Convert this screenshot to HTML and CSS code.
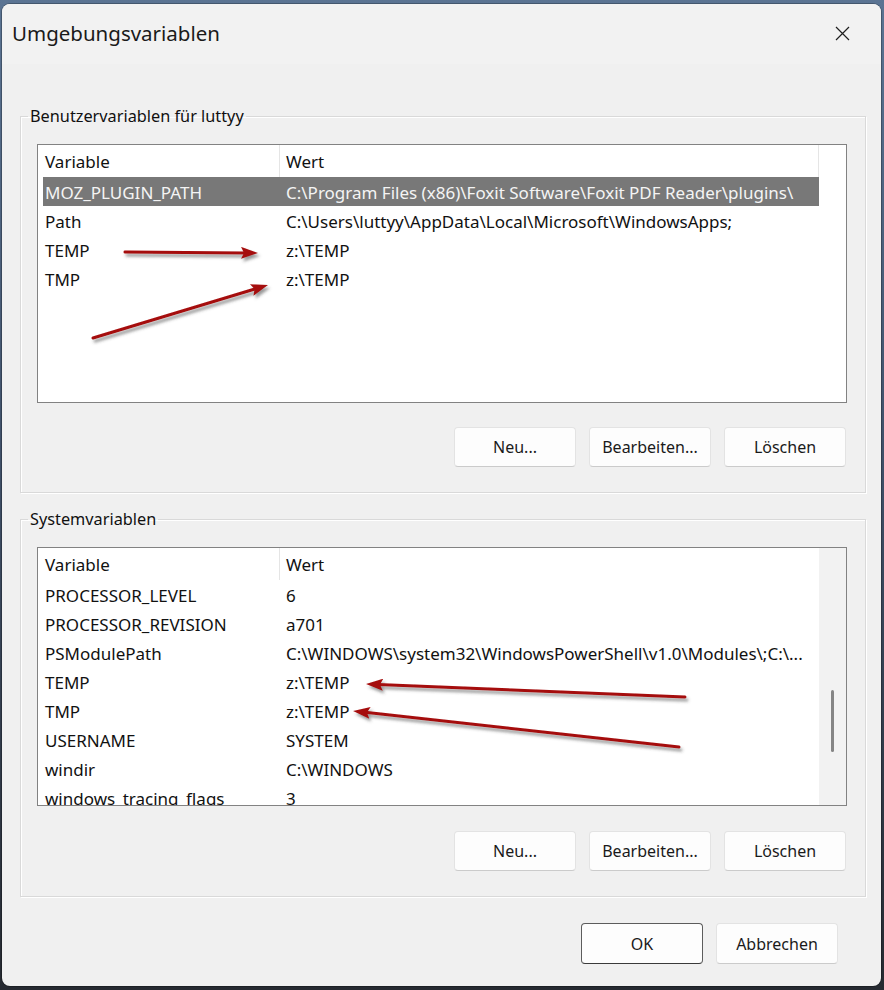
FILE: index.html
```html
<!DOCTYPE html>
<html lang="de">
<head>
  <meta charset="UTF-8">
  <title>Umgebungsvariablen</title>
  <link rel="stylesheet" href="styles.css">
</head>
<body>

<div class="dlg">
  <div class="titlebar">
    <span class="title">Umgebungsvariablen</span>
    <svg class="close" width="15" height="15" viewBox="0 0 15 15">
      <path d="M1 1 L14 14 M14 1 L1 14" stroke="#1f1f1f" stroke-width="1.2" fill="none"/>
    </svg>
  </div>

  <fieldset class="group">
    <legend>Benutzervariablen für luttyy</legend>
    <div class="list">
      <div class="rows">
        <div class="row head"><span>Variable</span><span>Wert</span><span></span></div>
        <div class="row sel"><span>MOZ_PLUGIN_PATH</span><span>C:\Program Files (x86)\Foxit Software\Foxit PDF Reader\plugins\</span><span></span></div>
        <div class="row"><span>Path</span><span>C:\Users\luttyy\AppData\Local\Microsoft\WindowsApps;</span><span></span></div>
        <div class="row"><span>TEMP</span><span>z:\TEMP</span><span></span></div>
        <div class="row"><span>TMP</span><span>z:\TEMP</span><span></span></div>
      </div>
    </div>
    <div class="btns">
      <button class="btn">Neu...</button>
      <button class="btn">Bearbeiten...</button>
      <button class="btn">Löschen</button>
    </div>
  </fieldset>

  <fieldset class="group sys">
    <legend>Systemvariablen</legend>
    <div class="list">
      <div class="rows">
        <div class="row head"><span>Variable</span><span>Wert</span></div>
        <div class="row"><span>PROCESSOR_LEVEL</span><span>6</span></div>
        <div class="row"><span>PROCESSOR_REVISION</span><span>a701</span></div>
        <div class="row"><span>PSModulePath</span><span>C:\WINDOWS\system32\WindowsPowerShell\v1.0\Modules\;C:\...</span></div>
        <div class="row"><span>TEMP</span><span>z:\TEMP</span></div>
        <div class="row"><span>TMP</span><span>z:\TEMP</span></div>
        <div class="row"><span>USERNAME</span><span>SYSTEM</span></div>
        <div class="row"><span>windir</span><span>C:\WINDOWS</span></div>
        <div class="row"><span>windows_tracing_flags</span><span>3</span></div>
      </div>
      <div class="vscroll"><div class="thumb"></div></div>
    </div>
    <div class="btns">
      <button class="btn">Neu...</button>
      <button class="btn">Bearbeiten...</button>
      <button class="btn">Löschen</button>
    </div>
  </fieldset>

  <div class="footer">
    <button class="btn big default">OK</button>
    <button class="btn big">Abbrechen</button>
  </div>
</div>

<!-- red annotation arrows drawn over the screenshot -->
<svg class="marks" width="884" height="990" viewBox="0 0 884 990">
  <defs>
    <marker id="head" viewBox="0 0 17 12" markerWidth="17" markerHeight="12" refX="5" refY="6" orient="auto" markerUnits="userSpaceOnUse">
      <path d="M0 0 L17 6 L0 12 L3 6 Z" fill="#a50d0d"/>
    </marker>
    <filter id="shade" x="-10%" y="-50%" width="120%" height="200%">
      <feDropShadow dx="2" dy="3" stdDeviation="1.6" flood-color="#444" flood-opacity="0.55"/>
    </filter>
  </defs>
  <g stroke="#a50d0d" stroke-width="3" fill="none" stroke-linecap="round" marker-end="url(#head)" filter="url(#shade)">
    <line x1="125" y1="252" x2="246" y2="252.9"/>
    <line x1="93" y1="338" x2="256.5" y2="288.5"/>
    <line x1="685" y1="697" x2="378" y2="684.5"/>
    <line x1="679" y1="747" x2="365" y2="712.3"/>
  </g>
</svg>

</body>
</html>
```

FILE: styles.css
```css
body {
  margin: 0;
  background: linear-gradient(180deg, #5b7493 0%, #40516a 45%, #262a31 100%);
  font-family: "Noto Sans", "Open Sans", sans-serif;
  color: #111;
  width: 884px;
  height: 990px;
  overflow: hidden;
}
.dlg {
  margin: 4px 3px 0 2px;
  height: 982px;
  background: #f0f0f0;
  border-radius: 8px;
  box-shadow: 0 0 0 1px rgba(0,0,0,0.25);
  overflow: hidden;
}
.titlebar {
  height: 60px;
  display: flex;
  align-items: center;
  justify-content: space-between;
  padding: 0 31px 0 10px;
  background: #f2f2f2;
}
.title {
  font-size: 20.5px;
  color: #1a1a1a;
  margin-top: -2px;
}
.close {
  display: block;
  margin-top: -2px;
}
.group {
  margin: 42px 15px 0 18px;
  padding: 18px 18px 25px 16px;
  border: 1px solid #d9d9d9;
  box-shadow: inset 1px 1px 0 #fff, 1px 1px 0 #fff;
  min-inline-size: 0;
}
.group.sys {
  margin-top: 16px;
}
.group legend {
  font-size: 16.3px;
  line-height: 20px;
  padding: 0 2px;
  margin-left: -9px;
}
.list {
  height: 259px;
  box-sizing: border-box;
  border: 1px solid #828282;
  background: #fff;
  overflow: hidden;
  display: flex;
}
.rows {
  flex: 1;
  min-width: 0;
}
.row {
  display: grid;
  grid-template-columns: 242px 539px 1fr;
  height: 29px;
  font-size: 17px;
}
.row span {
  white-space: nowrap;
  overflow: hidden;
  padding-left: 7px;
  padding-top: 2px;
  line-height: 27px;
}
.row span + span {
  padding-left: 6px;
}
.row.head {
  height: 32px;
}
.row.head span {
  line-height: 30px;
  border-right: 1px solid #e5e5e5;
}
.row.head span:last-child {
  border-right: none;
}
.row.sel span {
  background: #787878;
  color: #f4f4f4;
}
.row.sel span:first-child {
  background: linear-gradient(90deg, #fff 5px, #787878 5px);
}
.row.sel span:last-child {
  background: #fff;
}
.vscroll {
  width: 27px;
  background: #f2f2f2;
  display: flex;
  justify-content: center;
  padding-top: 142px;
  box-sizing: border-box;
}
.thumb {
  width: 3px;
  height: 62px;
  border-radius: 2px;
  background: #858585;
}
.btns {
  display: flex;
  justify-content: flex-end;
  gap: 13px;
  margin-top: 24px;
  padding-right: 1px;
}
.sys .btns {
  margin-top: 25px;
}
.btn {
  width: 122px;
  height: 40px;
  background: #fdfdfd;
  border: 1px solid #e3e3e3;
  border-bottom-color: #cbcbcb;
  border-radius: 4px;
  font-family: "Noto Sans", "Open Sans", sans-serif;
  font-size: 16px;
  color: #1a1a1a;
  padding: 0;
}
.footer {
  display: flex;
  justify-content: flex-end;
  gap: 13px;
  margin-top: 26px;
  padding-right: 43px;
}
.btn.big {
  height: 41px;
}
.btn.default {
  border-color: #5c5c5c;
  border-bottom-color: #3a3a3a;
}
.marks {
  position: absolute;
  top: 0;
  left: 0;
  pointer-events: none;
}
```
